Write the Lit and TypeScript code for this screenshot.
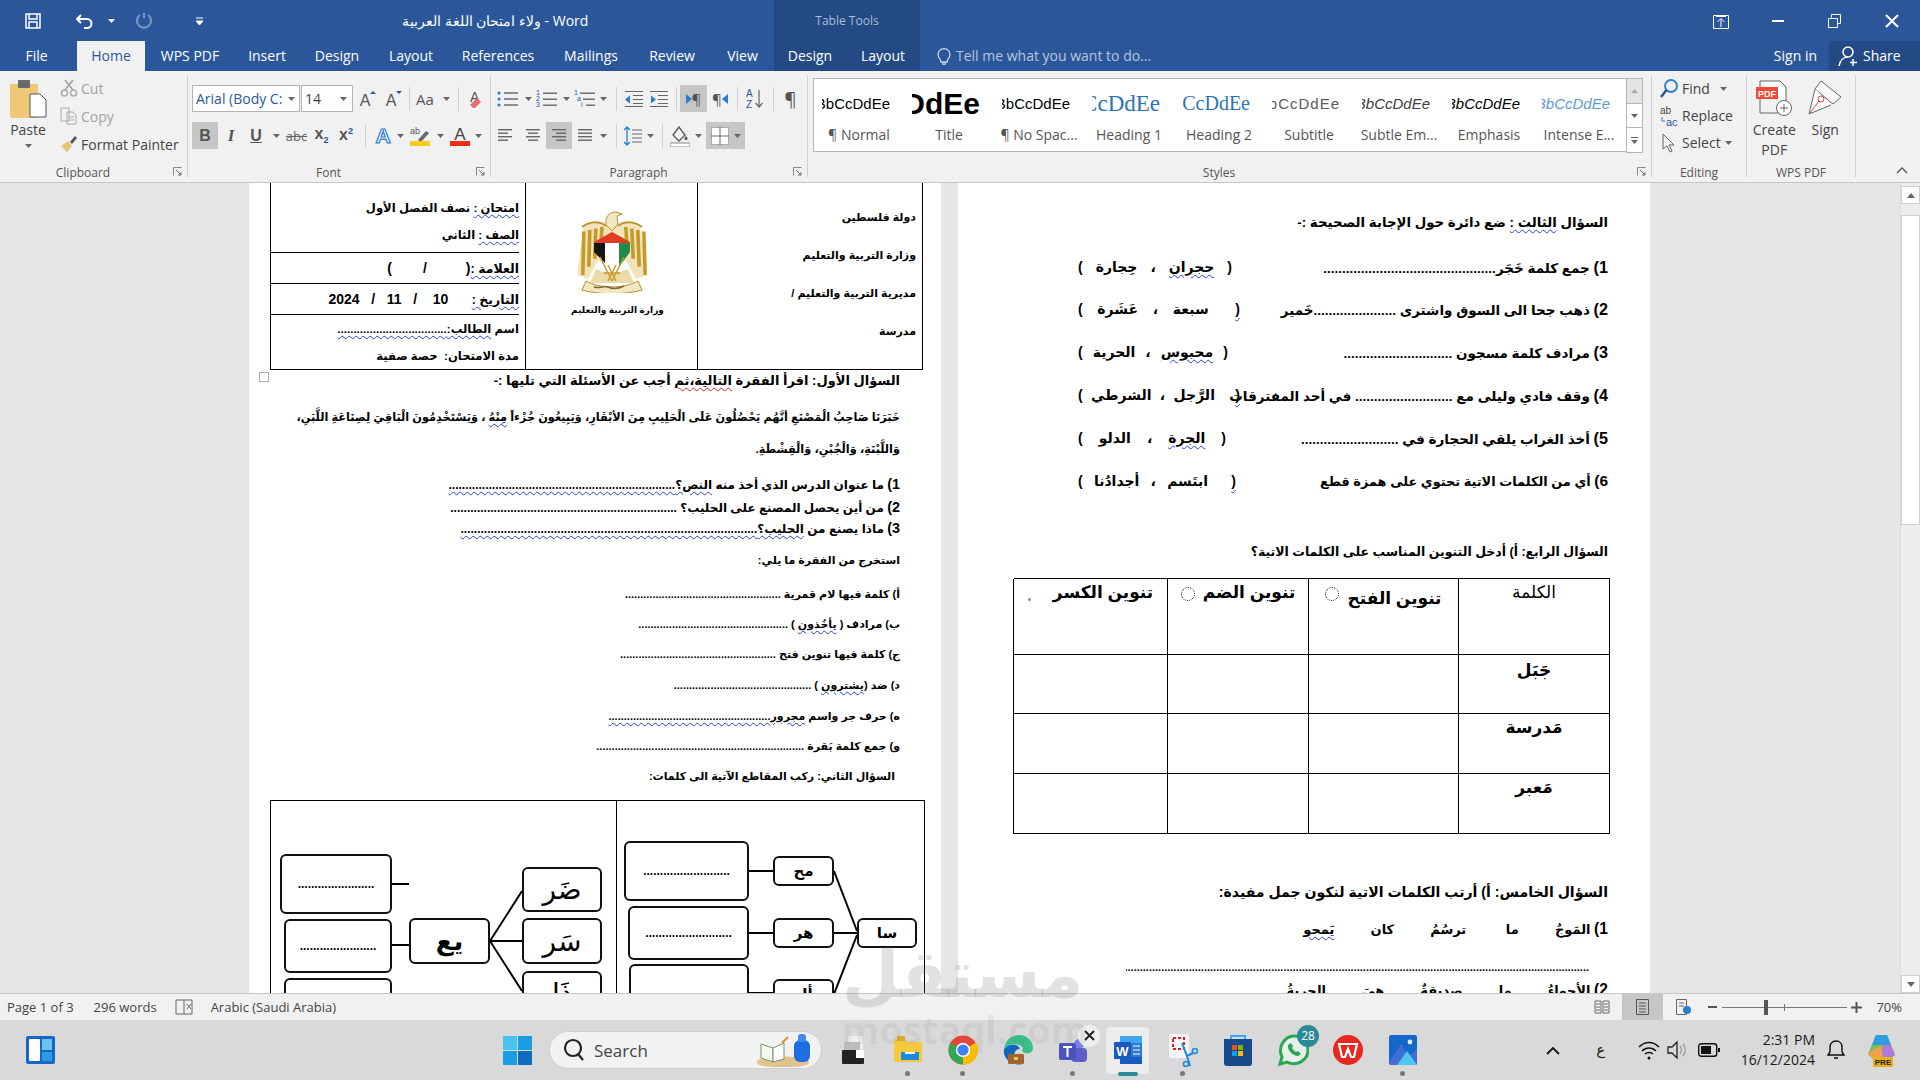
import { LitElement, html, svg, css, nothing } from 'lit';
import { customElement } from 'lit/decorators.js';

const ico = (w: number, h: number, body: any) => html`<svg width=${w} height=${h} viewBox="0 0 ${w} ${h}" fill="none">${body}</svg>`;

// little helper for the "rows of lines" icons used all over the paragraph group
const rows = (w: number, ys: number[], xs: number[][], col = '#666') => ico(w, 20, ys.map((y, i) => svg`<rect x=${xs[i][0]} y=${y} width=${xs[i][1]} height="1.4" fill=${col}></rect>`));

const arrow = html`<svg width="7" height="4" viewBox="0 0 7 4"><path d="M0 0h7L3.5 4z" fill="#666"></path></svg>`;
const launcher = html`<svg width="9" height="9" viewBox="0 0 9 9"><path d="M.5 .5h8M.5 .5v8" stroke="#888"></path><path d="M3 3l5 5M8 5v3H5" stroke="#666" fill="none"></path></svg>`;

const emblem = ico(72, 82, svg`
  <path d="M8 14C16 8 25 9 30 13L36 8 42 13C47 9 56 8 64 14L71 64 60 68 50 50H22L12 68 1 64Z" fill="#f2e3b8"></path>
  ${[6, 12, 18, 24].map(x => svg`<path d="M${x} ${16 + (24 - x) / 4}h3.6l-1 ${50 - x * 1.1}h-3.6z" fill="#c49a2a"></path>`)}
  ${[48, 54, 60, 66].map(x => svg`<path d="M${x} ${16 + (x - 48) / 4}h3.6l1.4 ${50 - (72 - x) * 1.1}h-3.6z" fill="#c49a2a"></path>`)}
  <path d="M30 14C29 6 33 1 40 1L46 3 41 5 42 13 36 20Z" fill="#f3e6c2" stroke="#b88f2a"></path>
  <path d="M6 16C14 10 24 10 30 15M66 16C58 10 48 10 42 15" stroke="#b88f2a" stroke-width="1.6" fill="none"></path>
  <path d="M18 31L36 21 54 31 53 36H19Z" fill="#e33a24"></path>
  <path d="M18 32H29V52L18 41Z" fill="#151515"></path>
  <path d="M29 32H43V58L36 62 29 55Z" fill="#fff"></path>
  <path d="M43 32H54V41L43 56Z" fill="#1f8a4a"></path>
  <path d="M20 58L36 64 52 58 58 72H14Z" fill="#ecdba8"></path>
  <path d="M24 46L36 70M48 46L36 70M28 62h16M32 54l8 16M40 54l-8 16" stroke="#c49a2a" stroke-width="1.4"></path>
  <path d="M10 70C24 78 48 78 62 70L66 79C48 84 24 84 6 79Z" fill="#f3e6c2" stroke="#b88f2a"></path>
  <path d="M18 76c6 2 10-2 14 0s10 2 16-1" stroke="#7d6a2c" stroke-width="1.4" fill="none"></path>`);

const winTile = (x: number, y: number, w: number, h: number, c: string) => svg`<rect x=${x} y=${y} width=${w} height=${h} fill=${c}></rect>`;

const TASK: Record<string, any> = {
  start: ico(29, 29, svg`${winTile(0, 0, 14, 14, '#4cc2f1')}${winTile(15, 0, 14, 14, '#1b9de2')}${winTile(0, 15, 14, 14, '#1b9de2')}${winTile(15, 15, 14, 14, '#0f6cc0')}`),
  view: ico(24, 30, svg`<rect x="7" y="1" width="15" height="20" fill="#eee"></rect><rect x="3" y="7" width="16" height="12" fill="#bbb"></rect><rect x="1" y="15" width="22" height="14" rx="1" fill="#222"></rect><rect x="15" y="15" width="8" height="8" fill="#fff"></rect>`),
  files: ico(30, 30, svg`<path d="M1 4h10l3 3h15v20H1z" fill="#f7c93e"></path><rect x="4" y="1" width="8" height="5" fill="#e0a92a"></rect><rect x="8" y="17" width="18" height="8" fill="#1b8ae0"></rect><rect x="12" y="17" width="10" height="2" fill="#fff"></rect>`),
  chrome: ico(30, 30, svg`<circle cx="15" cy="15" r="14.5" fill="#eb4335"></circle><path d="M15 15L2.4 7.8A14.5 14.5 0 0 0 15 29.5l7-11z" fill="#34a853"></path><path d="M15 15l13-7.5A14.5 14.5 0 0 1 15 29.5z" fill="#fbbc05"></path><circle cx="15" cy="15" r="7.2" fill="#fff"></circle><circle cx="15" cy="15" r="5.6" fill="#3e82f1"></circle>`),
  edge: ico(32, 32, svg`<path d="M2 15C3 6 10 1 17 1c8 0 14 6 14 13 0 4-4 6-8 5-4-1-3-4-2-5-2-5-15-5-19 1z" fill="#3bbf8a"></path><path d="M2 15c4-5 14-6 16 0-5 0-7 5-5 10 1 3 5 5 9 4-3 2-8 2-12 0C4 26 1 21 2 15z" fill="#1565c0"></path><rect x="6" y="20" width="16" height="10" rx="1" fill="#a0652a"></rect><rect x="12" y="23" width="4" height="3" fill="#f0c96a"></rect>`),
  teams: ico(30, 30, svg`<circle cx="21" cy="9" r="5" fill="#7b83eb"></circle><rect x="13" y="13" width="16" height="14" rx="4" fill="#5b5fc7"></rect><rect x="1" y="8" width="17" height="17" rx="2" fill="#4b53bc"></rect><path d="M5 12h9M9.5 12v10" stroke="#fff" stroke-width="2"></path>`),
  word: ico(30, 30, svg`<path d="M7 1h22v28H7z" fill="#2b7cd3"></path><path d="M7 1h22v7H7z" fill="#41a5ee"></path><path d="M7 22h22v7H7z" fill="#185abd"></path><rect x="1" y="7" width="17" height="17" rx="1" fill="#185abd"></rect><text x="9.5" y="20.5" font-size="13" font-weight="700" fill="#fff" text-anchor="middle" font-family="Liberation Sans">W</text><path d="M20 11h7M20 15h7M20 19h7" stroke="#fff" stroke-width="1.2"></path>`),
  snip: ico(30, 34, svg`<rect x="1" y="1" width="20" height="24" rx="2" fill="#f5f5f5"></rect><rect x="5" y="5" width="11" height="11" fill="none" stroke="#e02020" stroke-width="2" stroke-dasharray="3 2"></rect><path d="M14 10l5 13 6-3M22 33l-3-10" stroke="#1b8ae0" stroke-width="2" fill="none"></path><circle cx="27" cy="18" r="2.5" stroke="#1b8ae0" stroke-width="1.6"></circle><circle cx="18" cy="31" r="2.5" stroke="#1b8ae0" stroke-width="1.6"></circle>`),
  store: ico(30, 32, svg`<path d="M8 5V2h14v3" stroke="#41a5ee" stroke-width="2" fill="none"></path><path d="M1 5h28v24a3 3 0 0 1-3 3H4a3 3 0 0 1-3-3z" fill="#164a8a"></path>${winTile(9, 11, 5, 5, '#f25022')}${winTile(15, 11, 5, 5, '#7fba00')}${winTile(9, 17, 5, 5, '#00a4ef')}${winTile(15, 17, 5, 5, '#ffb900')}`),
  wa: ico(32, 34, svg`<path d="M3 31l2-7C0 14 8 3 17 3c8 0 14 6 14 14 0 10-11 17-21 12z" stroke="#2aa84f" stroke-width="3" fill="#e6efe8"></path><path d="M11 12c-1 4 4 11 10 11l3-2-3-3-2 1c-2-1-3-3-4-4l1-2-2-3z" fill="#2aa84f"></path>`),
  wps: ico(30, 30, svg`<circle cx="15" cy="15" r="15" fill="#e8271f"></circle><path d="M6 9h18l-3 13h-3l-3-8-3 8H9z" fill="none" stroke="#fff" stroke-width="2.2"></path>`),
  photos: ico(28, 30, svg`<rect width="28" height="30" rx="2" fill="#1668c8"></rect><path d="M0 28L12 9l8 12 8-7v14a2 2 0 0 1-2 2H2z" fill="#3f6fd6"></path><path d="M8 30L18 16l10 14z" fill="#4fc6f2"></path><circle cx="21" cy="7" r="2.4" fill="#dcecff"></circle>`),
  copilot: ico(30, 36, svg`<path d="M9 3h11l8 20-6 4H6l-5-5z" fill="#6fbf5e"></path><path d="M9 3h11l4 10H5z" fill="#2f9be0"></path><path d="M16 13h8l4 10-6 4H14z" fill="#b07ad6"></path><path d="M8 17l6-4 2 14H6l-5-5z" fill="#f0a04a"></path><rect x="6" y="25" width="20" height="10" rx="1" fill="#e8b21c"></rect><text x="16" y="33" font-size="8" font-weight="700" text-anchor="middle" fill="#222" font-family="Liberation Sans">PRE</text>`),
};

const GALLERY = [
  ['Normal', 'pn', '¶ Normal'], ['Title', 'pt', 'Title'], ['NoSp', 'pn', '¶ No Spac...'],
  ['H1', 'ph1', 'Heading 1'], ['H2', 'ph2', 'Heading 2'], ['Sub', 'psub', 'Subtitle'],
  ['SE', 'pse', 'Subtle Em...'], ['Em', 'pem', 'Emphasis'], ['IE', 'pie', 'Intense E...'],
];

const dots = (n: number) => '.'.repeat(n);
// the list numbers are set a bit larger than the arabic text around them
const n = (s: string) => html`<span class="n">${s}</span>`;

// y = middle of the line on screen, flow() turns that into margins
const LEFT_LINES = [
  { y: 381, cls: 'f14', c: html`السؤال الأول: اقرأ الفقرة <span class="sq r">التالية،ثم</span> أجب عن الأسئلة التي تليها :-` },
  { y: 417, cls: 'f12', c: html`خَبَرَنَا صَاحِبُ الْمَصْنَعِ أنَّهُم يَحْصُلُونَ عَلَى الْحَلِيبِ مِنَ الأبْقَارِ، وَيَبِيعُونَ جُزْءاً <span class="sq">مِنْهُ</span> ، وَيَسْتَخْدِمُونَ الْبَاقِيَ لِصِنَاعَةِ اللَّبَنِ،` },
  { y: 449, cls: 'f12', c: html`وَاللَّبْنَةِ، وَالْجُبْنِ، وَالْقِشْطَةِ.` },
  { y: 484, cls: 'f13', c: html`${n('1)')} ما عنوان الدرس الذي أخذ منه <span class="sq">النص؟${dots(68)}</span>` },
  { y: 507, cls: 'f13', c: html`${n('2)')} من أين يحصل المصنع على الحليب؟ ${dots(68)}` },
  { y: 528, cls: 'f13', c: html`${n('3)')} ماذا يصنع من <span class="sq">الحليب؟${dots(89)}</span>` },
  { y: 560, cls: 'f11', c: html`استخرج من الفقرة ما يلي:` },
  { y: 594, cls: 'f11', c: html`أ) كلمة فيها لام قمرية ${dots(51)}` },
  { y: 624, cls: 'f11', c: html`ب) مرادف ( <span class="sq">يأخُذون</span> ) ${dots(49)}` },
  { y: 654, cls: 'f11', c: html`ج) كلمة فيها تنوين فتح ${dots(51)}` },
  { y: 685, cls: 'f11', c: html`د) ضد (<span class="sq">يشترون</span> ) ${dots(45)}` },
  { y: 716, cls: 'f11', c: html`ه) حرف جر واسم <span class="sq">مجرور${dots(53)}</span>` },
  { y: 746, cls: 'f11', c: html`و) جمع كلمة بَقرة ${dots(68)}` },
  { y: 776, cls: 'f11 ind', c: html`السؤال الثاني: ركب المقاطع الآتية الى كلمات:` },
];

// boxes of the syllable diagram, in px from the table corner
const NODES = [
  { x: 353, y: 40, w: 125, h: 60, t: dots(26), k: 'dt' }, { x: 357, y: 105, w: 121, h: 54, t: dots(26), k: 'dt' }, { x: 358, y: 163, w: 120, h: 60, t: '', k: 'dt' },
  { x: 502, y: 55, w: 61, h: 30, t: 'مح', k: 'sm' }, { x: 502, y: 117, w: 61, h: 30, t: 'هر', k: 'sm' }, { x: 502, y: 178, w: 61, h: 30, t: 'أل', k: 'sm' },
  { x: 586, y: 117, w: 60, h: 30, t: 'سا', k: 'sm' },
  { x: 9, y: 53, w: 112, h: 60, t: dots(23), k: 'dt' }, { x: 13, y: 118, w: 108, h: 54, t: dots(23), k: 'dt' }, { x: 13, y: 177, w: 108, h: 60, t: '', k: 'dt' },
  { x: 138, y: 117, w: 81, h: 46, t: 'يع', k: 'lg' },
  { x: 251, y: 66, w: 80, h: 45, t: 'ضَر', k: 'xl' }, { x: 251, y: 117, w: 80, h: 46, t: 'سَر', k: 'xl' }, { x: 251, y: 170, w: 80, h: 45, t: 'ذَا', k: 'xl' },
];
const WIRES = [
  [478, 70, 502, 70], [478, 132, 502, 132], [478, 192, 502, 192],
  [563, 70, 586, 130], [563, 132, 586, 132], [563, 193, 586, 134],
  [121, 83, 138, 83], [121, 144, 138, 144],
  [219, 140, 251, 90], [219, 140, 251, 140], [219, 140, 251, 190],
];

const CHOICES = [
  { q: html`${n('1)')} جمع كلمة خَجَر${dots(46)}`, w: 154, o: [html`<span class="sq">حجران</span>`, 'حِجارة'] },
  { q: html`${n('2)')} ذهب جحا الى السوق واشترى ${dots(22)}خَمير`, w: 150, o: ['سبعة', 'عَشَرة'], sq: true },
  { q: html`${n('3)')} مرادف كلمة مسجون ${dots(29)}`, w: 150, o: [html`<span class="sq">محبوس</span>`, 'الحرية'] },
  { q: html`${n('4)')} وقف فادي وليلى مع ${dots(26)} في أحد المفترقات`, w: 150, o: ['الرَّجل', 'الشرطي'], sq: true },
  { q: html`${n('5)')} أخذ الغراب يلقي الحجارة في ${dots(26)}`, w: 148, o: [html`<span class="sq">الجرة</span>`, 'الدلو'] },
  { q: html`<span class="tight">${n('6)')} أي من الكلمات الاتية تحتوي على همزة قطع</span>`, w: 146, o: ['ابتَسم', 'أجدادُنا'], sq: true },
];

@customElement('app-root')
export class AppRoot extends LitElement {
  static styles = css`
    :host { display: block; position: relative; width: 1920px; height: 1080px; overflow: hidden; background: #e6e6e6;
      font-family: "Open Sans", "Noto Sans", sans-serif; }
    svg { display: block; }
    .title { height: 41px; background: #2b579a; display: flex; align-items: center; color: #fff; position: relative; }
    .qat { display: flex; align-items: center; width: 774px; flex: none; }
    .qat span { display: flex; justify-content: center; }
    .doc-name { position: absolute; left: 402px; font-size: 14px; color: #fff; white-space: nowrap; }
    .tools { width: 146px; height: 41px; background: #234a84; color: #a9bcd8; font-size: 12px; display: flex; align-items: center; justify-content: center; }
    .win { margin-left: auto; display: flex; align-items: center; }
    .win span { width: 57px; display: flex; justify-content: center; }
    .tabs { height: 30px; background: #2b579a; display: flex; color: #fff; font-size: 14px; line-height: 30px; }
    .tab { text-align: center; box-sizing: border-box; }
    .tab.file { padding-right: 4px; }
    .tab.on { background: #f1f1f1; color: #2b579a; }
    .tab.ctx { background: #234a84; }
    .tell { display: flex; align-items: center; gap: 5px; margin-left: 17px; color: #b6c6de; font-size: 14px; }
    .signin { margin-left: auto; padding-right: 12px; }
    .share { width: 91px; background: #234a84; display: flex; align-items: center; gap: 3px; padding-left: 9px; box-sizing: border-box; }

    .ribbon { height: 112px; background: #f1f1f1; display: flex; border-bottom: 1px solid #c6c6c6; box-sizing: border-box; color: #444; font-size: 13px; }
    .grp { position: relative; margin: 4px 0 5px; border-right: 1px solid #d0d0d0; box-sizing: border-box; flex: none; }
    .glabel { position: absolute; bottom: -4px; left: 0; right: 0; text-align: center; font-size: 12px; color: #555; line-height: 16px; }
    .glabel.off { right: 21px; }
    .launch { position: absolute; right: 5px; bottom: 1px; }
    .clip { width: 188px; display: flex; }
    .paste { width: 56px; display: flex; flex-direction: column; align-items: center; padding-top: 5px; }
    .paste-t { margin-top: 3px; line-height: 18px; font-size: 14px; }
    .paste-a { margin-top: 5px; }
    .clip-list { display: flex; flex-direction: column; margin-top: -1px; }
    .ci { display: flex; align-items: center; gap: 3px; height: 28px; white-space: nowrap; font-size: 14px; margin-left: 4px; }
    .ci.off { color: #a3a3a3; }
    .rw { display: flex; align-items: center; height: 27px; }
    .r1 { margin-top: 10px; }
    .r2 { margin-top: 10px; }
    .s { display: flex; align-items: center; justify-content: center; flex: none; height: 27px; box-sizing: border-box; }
    .s.on { background: #c6c6c6; }
    .sep { width: 1px; height: 24px; background: #d0d0d0; flex: none; }
    .combo { height: 27px; background: #fff; border: 1px solid #b4b4b4; box-sizing: border-box; display: flex; align-items: center; justify-content: space-between; padding: 0 5px 0 3px; font-size: 14px; color: #444; flex: none; overflow: hidden; white-space: nowrap; }
    .fnt { width: 108px; padding-right: 4px; }
    .siz { width: 52px; margin-left: 1px; }
    .tb { font-family: "Liberation Serif", serif; font-size: 17px; color: #555; }
    .tbs { font-family: "Liberation Sans", sans-serif; font-size: 16px; color: #555; font-weight: 700; }
    .gal-w { width: 844px; }
    .gal { position: absolute; left: 5px; top: 3px; width: 813px; height: 74px; background: #fff; border: 1px solid #b4b4b4; border-right: none; display: flex; box-sizing: border-box; }
    .gi { width: 90px; flex: none; display: flex; flex-direction: column; align-items: center; font-size: 14px; color: #555; }
    .pv { width: 68px; height: 41px; overflow: hidden; display: flex; justify-content: flex-end; align-items: center; white-space: nowrap; color: #000; font-family: "Liberation Sans", sans-serif; font-size: 15px; margin: 4px 6px 0 0; }
    .pv span { flex: none; }
    .gl { line-height: 22px; white-space: nowrap; }
    .pt { font-size: 30px; font-weight: 700; }
    .ph1 { font-family: "Liberation Serif", serif; font-size: 23px; color: #2e74b5; }
    .ph2 { font-family: "Liberation Serif", serif; font-size: 20px; color: #2e74b5; }
    .psub { color: #5a5a5a; letter-spacing: 1px; }
    .pse { font-style: italic; color: #404040; }
    .pem { font-style: italic; }
    .pie { font-style: italic; color: #5b9bd5; }
    .gsc { position: absolute; left: 818px; top: 3px; width: 17px; height: 74px; display: flex; flex-direction: column; }
    .gsc div { flex: 1; border: 1px solid #b4b4b4; margin-bottom: -1px; background: #fff; display: flex; align-items: center; justify-content: center; }
    .gsc div.first { background: #e4e4e4; }
    .edit { width: 95px; padding: 0 0 0 8px; }
    .ed { display: flex; align-items: center; gap: 4px; height: 27px; font-size: 14px; white-space: nowrap; }
    .wps { width: 109px; display: flex; justify-content: space-around; padding: 5px 6px 0 0; }
    .wb { display: flex; flex-direction: column; align-items: center; font-size: 14px; line-height: 20px; text-align: center; }
    .collapse { flex: 1; position: relative; }
    .collapse svg { position: absolute; right: 12px; bottom: 8px; }

    .doc { height: 810px; display: flex; background: #e6e6e6; padding-left: 249px; gap: 17px; position: relative; box-sizing: border-box; }
    .page { width: 692px; height: 810px; background: #fff; overflow: hidden; flex: none; position: relative; box-sizing: border-box;
      font-family: "Liberation Sans", "DejaVu Sans", sans-serif; font-weight: 700; color: #000; }
    .n { font-size: 1.2em; }
    .sq { text-decoration: underline wavy #2440e0 1px; text-underline-offset: 2px; }
    .sq.r { text-decoration-color: #d8261c; }
    .hd { margin-right: 18px; width: 653px; height: 187px; border: 1px solid #000; border-top: none; box-sizing: border-box; display: grid; grid-template-columns: 224px 172px 255px; font-size: 11px; }
    .hd > div + div { border-right: 1px solid #000; }
    .c-a { display: flex; flex-direction: column; justify-content: space-between; padding: 28px 6px 32px 0; }
    .c-b { display: flex; flex-direction: column; align-items: center; padding-top: 28px; }
    .c-b p { margin: 12px -12px 0 0; font-size: 9px; }
    .c-c { padding: 0 6px 0 0; display: flex; flex-direction: column; font-size: 11.6px; }
    .cc-top { height: 69px; display: flex; flex-direction: column; justify-content: space-around; padding: 11px 0 4px; box-sizing: border-box; }
    .cc-row { height: 31px; border-top: 1px solid #000; display: flex; align-items: center; white-space: pre; box-sizing: border-box; font-size: 12.5px; }
    .cc-big { font-size: 14px; }
    .cc-row.last { height: 56px; flex-direction: column; align-items: flex-start; justify-content: space-around; font-size: 11.6px; }
    .l { height: 20px; line-height: 20px; white-space: pre; margin-right: 41px; }
    .f14 { font-size: 13px; }
    .f13 { font-size: 12px; }
    .f12 { font-size: 11.3px; }
    .f11 { font-size: 11px; }
    .ind { margin-right: 46px; }
    .dg { position: absolute; left: 21px; top: 617px; width: 655px; height: 400px; border: 1px solid #000; box-sizing: border-box; }
    .dg-mid { position: absolute; left: 345px; top: 0; bottom: 0; width: 1px; background: #000; }
    .dg svg { position: absolute; left: 0; top: 0; }
    .node { position: absolute; border: 2px solid #111; border-radius: 6px; background: #fff; box-sizing: border-box; display: flex; align-items: center; justify-content: center; color: #000; font-weight: 400; }
    .node.dt { font-size: 12px; font-weight: 700; }
    .node.sm { font-size: 15px; font-weight: 700; }
    .node.lg { font-size: 26px; font-weight: 700; }
    .node.xl { font-size: 28px; }
    .handle { position: absolute; left: 10px; top: 189px; width: 10px; height: 10px; border: 1px solid #aaa; background: #fff; box-sizing: border-box; }

    .q3 { margin-right: 42px; display: flex; justify-content: space-between; height: 22px; line-height: 22px; white-space: pre; font-size: 13.5px; margin-left: 120px; }
    .tight { font-size: 12.9px; }
    .h-l { margin-right: 42px; height: 22px; line-height: 22px; white-space: pre; font-size: 13.3px; }
    .h-l.s4 { font-size: 12.5px; }
    .h-l.s5 { font-size: 14.1px; }
    .ch { display: flex; justify-content: space-between; flex: none; font-size: 14px; }
    .ch i { font-style: normal; }
    .ch i.wave { text-decoration: underline wavy #2440e0 1px; text-underline-offset: 3px; padding: 0 0 0 12px; margin-right: -12px; }
    .tbl { margin: 15px 40px 0 56px; display: grid; grid-template-columns: 151px 150px 141px 154px; grid-template-rows: 76px 59px 60px 60px; border: 1px solid #000; border-width: 1px 1px 0 0; box-sizing: border-box; width: 596px; }
    .tbl > div { border-left: 1px solid #000; border-bottom: 1px solid #000; display: flex; justify-content: center; font-size: 17px; line-height: 26px; padding-top: 1px; gap: 8px; }
    .tbl > div.w { font-weight: 400; }
    .ring { width: 12px; height: 12px; border: 1px dotted #222; border-radius: 50%; margin-top: 7px; flex: none; }
    .mark { width: 3px; height: 3px; background: #888; border-radius: 50%; margin: 18px 14px 0 0; flex: none; }
    .words { margin-right: 42px; display: flex; height: 22px; line-height: 22px; font-size: 13px; white-space: pre; }
    .words span { flex: none; }
    .sqdots { margin-right: 61px; width: 463px; height: 12px; line-height: 12px; overflow: hidden; white-space: nowrap; font-size: 11px; text-decoration: underline wavy #2440e0 1px; text-underline-offset: 1px; }

    .sb { position: absolute; right: 0; top: 0; bottom: 0; width: 20px; background: #ededed; border-left: 1px solid #dcdcdc; box-sizing: border-box; }
    .sb-btn { height: 18px; margin-top: 3px; display: flex; align-items: center; justify-content: center; background: #fff; border: 1px solid #cfcfcf; box-sizing: border-box; }
    .sb-th { position: absolute; left: 0; right: 0; top: 32px; height: 310px; background: #fff; border: 1px solid #cfcfcf; box-sizing: border-box; }
    .sb-dn { position: absolute; left: 0; right: 0; bottom: 0; }

    .status { height: 27px; background: #f1f1f1; border-top: 1px solid #c6c6c6; box-sizing: border-box; display: flex; align-items: center; font-size: 13px; color: #444; white-space: nowrap; }
    .st-l { display: flex; align-items: center; margin-left: 7px; }
    .st-r { margin-left: auto; display: flex; align-items: center; height: 100%; }
    .st-b { width: 41px; height: 100%; display: flex; align-items: center; justify-content: center; }
    .st-b.on { background: #c6c6c6; }
    .zoom { display: flex; align-items: center; margin-left: 4px; }
    .track { width: 125px; height: 1px; background: #777; position: relative; margin: 0 4px 0 5px; }
    .thumb { position: absolute; left: 42px; top: -7px; width: 4px; height: 15px; background: #555; }
    .tick { position: absolute; left: 62px; top: -3px; width: 1px; height: 7px; background: #777; }
    .pct { margin: 0 18px 0 14px; }

    .task { height: 60px; background: #d9d9d9; display: flex; align-items: center; position: relative; }
    .wid { margin-left: 26px; width: 477px; flex: none; }
    .sl { width: 46px; flex: none; }
    .search { width: 273px; height: 38px; border-radius: 19px; background: #f2f2f2; border: 1px solid #d0d0d0; box-sizing: border-box; display: flex; align-items: center; padding-left: 13px; gap: 9px; font-size: 17px; color: #444; margin-right: 3px; position: relative; flex: none; }
    .search em { position: absolute; right: 6px; top: 2px; }
    .app { width: 55px; height: 47px; flex: none; display: flex; align-items: center; justify-content: center; position: relative; }
    .app.act { background: #ececec; border-radius: 4px; width: 43px; margin: 0 6px; }
    .pin { position: absolute; bottom: -2px; left: 50%; margin-left: -2.5px; width: 5px; height: 5px; border-radius: 50%; background: #777; }
    .pin.bar { width: 20px; margin-left: -10px; height: 4px; border-radius: 2px; background: #2b8a9a; }
    .bdg { position: absolute; right: 1px; top: -2px; width: 22px; height: 22px; border-radius: 50%; background: #2b8a9a; color: #fff; font-size: 12px; display: flex; align-items: center; justify-content: center; }
    .bdg.x { background: #eee; right: 0; }
    .tray { margin-left: auto; display: flex; align-items: center; }
    .clock { font-size: 14px; line-height: 20px; text-align: right; color: #1a1a1a; white-space: nowrap; margin-left: 21px; }
    .ayn { font-family: "DejaVu Sans", sans-serif; font-size: 15px; color: #222; width: 30px; text-align: center; margin: 0 22px 0 26px; }

    .wm { position: absolute; left: 842px; top: 942px; width: 240px; pointer-events: none; text-align: center; font-family: "DejaVu Sans", sans-serif; font-weight: 700; line-height: 1; }
    .wm b { display: block; font-size: 66px; color: rgba(110,110,110,.2); }
    .wm i { display: block; font-style: normal; font-size: 38px; color: rgba(110,110,110,.09); font-family: "Open Sans", sans-serif; margin-top: 2px; }
  `;

  private slot(w: number, c: any, on = false) {
    return html`<span class="s ${on ? 'on' : ''}" style="width:${w}px">${c}</span>`;
  }

  private titleBar() {
    return html`<div class="title">
      <div class="qat">
        <span style="width:66px">${ico(16, 16, svg`<path d="M1 1h14v14H1zM4 1v5h8V1M4 15v-6h8v6" stroke="#fff" stroke-width="1.5"></path>`)}</span>
        <span style="width:40px">${ico(20, 16, svg`<path d="M5 2L1 6l4 4M1 6h10a4 4 0 0 1 0 9H8" stroke="#fff" stroke-width="2"></path>`)}</span>
        <span style="width:10px">${ico(7, 4, svg`<path d="M0 0h7L3.5 4z" fill="#fff"></path>`)}</span>
        <span style="width:56px">${ico(18, 18, svg`<path d="M13 3a7 7 0 1 1-8 0M9 1v5" stroke="#7f9ac4" stroke-width="2"></path>`)}</span>
        <span style="width:56px">${ico(8, 8, svg`<path d="M0 1h7M0 4h7L3.5 8z" stroke="#fff" fill="#fff"></path>`)}</span>
      </div>
      <div class="doc-name"><bdi>ولاء امتحان اللغة العربية</bdi> - Word</div>
      <div class="tools">Table Tools</div>
      <div class="win">
        <span>${ico(16, 16, svg`<path d="M.5 2.5h15v13H.5z" stroke="#fff"></path><path d="M8 14V6M4.500 9L8 5.500 11.500 9M3 3.500h10" stroke="#fff"></path>`)}</span>
        <span>${ico(12, 3, svg`<rect width="12" height="2" y="1" fill="#fff"></rect>`)}</span>
        <span>${ico(13, 14, svg`<path d="M3.500 3.500V.5h9v9h-3M.5 4.500h9v9h-9z" stroke="#fff"></path>`)}</span>
        <span>${ico(14, 14, svg`<path d="M1 1l12 12M13 1L1 13" stroke="#fff" stroke-width="2"></path>`)}</span>
      </div>
    </div>`;
  }

  private tabBar() {
    const tabs: [string, number, string][] = [['File', 77, 'file'], ['Home', 68, 'on'], ['WPS PDF', 90, ''], ['Insert', 64, ''], ['Design', 76, ''], ['Layout', 72, ''], ['References', 102, ''], ['Mailings', 84, ''], ['Review', 78, ''], ['View', 63, ''], ['Design', 72, 'ctx'], ['Layout', 74, 'ctx']];
    return html`<div class="tabs">
      ${tabs.map(([t, w, k]) => html`<div class="tab ${k}" style="width:${w}px">${t}</div>`)}
      <div class="tell">${ico(14, 19, svg`<path d="M3 12a6 6 0 1 1 8 0l-1 3H4zM5 17h4" stroke="#c9d6ea" stroke-width="1.300"></path>`)}Tell me what you want to do...</div>
      <div class="signin">Sign in</div>
      <div class="share">${ico(22, 22, svg`<circle cx="10" cy="7" r="5" stroke="#fff" stroke-width="1.500"></circle><path d="M1 21c1-6 5-9 9-9M15 14v7M12 17.500h7" stroke="#fff" stroke-width="1.500"></path>`)}Share</div>
    </div>`;
  }

  private clipboard() {
    return html`<div class="grp clip">
      <div class="paste">
        ${ico(38, 38, svg`<rect x="1" y="4" width="28" height="34" rx="1" fill="#efc877"></rect><rect x="9" y="0" width="12" height="8" rx="1" fill="#6b6b6b"></rect><path d="M21 14h10l6 6v17H21z" fill="#fff" stroke="#555"></path>`)}
        <div class="paste-t">Paste</div>
        <div class="paste-a">${arrow}</div>
      </div>
      <div class="clip-list">
        <div class="ci off">${ico(18, 18, svg`<path d="M5 1l8 10M13 1L5 11" stroke="#aaa" stroke-width="2"></path><circle cx="4.500" cy="14" r="3" stroke="#aaa" stroke-width="1.500"></circle><circle cx="13.500" cy="14" r="3" stroke="#aaa" stroke-width="1.500"></circle>`)}Cut</div>
        <div class="ci off">${ico(18, 18, svg`<path d="M1 1h8v13H1zM7 5h6l3 3v9H7z" stroke="#aaa" fill="#f1f1f1"></path><path d="M9 10h5M9 13h5" stroke="#aaa"></path>`)}Copy</div>
        <div class="ci">${ico(18, 18, svg`<path d="M1 11l7-5 4 5-5 6z" fill="#e8c477"></path><path d="M10 7l5-6 2 2-5 6z" fill="#555"></path>`)}Format Painter</div>
      </div>
      <div class="glabel off">Clipboard</div><div class="launch">${launcher}</div>
    </div>`;
  }

  private fontGroup() {
    const A = (c: string, up: boolean) => ico(18, 18, svg`<text x="7" y="16" font-size="16" text-anchor="middle" fill="#555" font-family="Liberation Sans">A</text><path d=${up ? 'M12 4l3-3 3 3z' : 'M12 1h6l-3 3z'} fill=${c}></path>`);
    const bar = (c: string, g: any) => ico(20, 20, svg`${g}<rect y="15" x="0" width="20" height="5" fill=${c}></rect>`);
    return html`<div class="grp" style="width:303px;padding-left:4px">
      <div class="rw r1">
        <div class="combo fnt"><span style="color:#2b579a">Arial (Body C:</span>${arrow}</div>
        <div class="combo siz"><span>14</span>${arrow}</div>
        ${this.slot(27, A('#2b579a', true))}${this.slot(25, A('#2b579a', false))}
        ${this.slot(4, nothing)}<span class="sep"></span>
        ${this.slot(30, html`<span style="color:#555;font-size:15px">Aa</span>`)}${this.slot(12, arrow)}
        ${this.slot(6, nothing)}<span class="sep"></span>
        ${this.slot(28, ico(18, 20, svg`<text x="6" y="13" font-size="14" fill="#555" font-family="Liberation Sans">A</text><path d="M6 16l7-7 4 4-6 6H9z" fill="#e2736e"></path>`))}
      </div>
      <div class="rw r2">
        ${this.slot(26, html`<span class="tbs">B</span>`, true)}
        ${this.slot(26, html`<span class="tb" style="font-style:italic;font-weight:700">I</span>`)}
        ${this.slot(24, html`<span class="tbs" style="text-decoration:underline">U</span>`)}
        ${this.slot(16, arrow)}
        ${this.slot(25, html`<span style="font-size:13px;color:#666;text-decoration:line-through">abc</span>`)}
        ${this.slot(25, html`<span class="tbs">x<sub style="font-size:9px;color:#2b579a">2</sub></span>`)}
        ${this.slot(24, html`<span class="tbs">x<sup style="font-size:9px;color:#2b579a">2</sup></span>`)}
        ${this.slot(7, nothing)}<span class="sep"></span>${this.slot(6, nothing)}
        ${this.slot(22, html`<span style="font:700 21px 'Liberation Sans';color:#fff;-webkit-text-stroke:1.2px #2b7cd3">A</span>`)}
        ${this.slot(12, arrow)}
        ${this.slot(27, bar('#fecb1e', svg`<text x="0" y="8" font-size="9" fill="#555" font-family="Liberation Sans">ab</text><path d="M8 14l8-9 3 2-8 9z" fill="#666"></path>`))}
        ${this.slot(14, arrow)}
        ${this.slot(25, bar('#ef2c14', svg`<text x="10" y="14" font-size="17" text-anchor="middle" fill="#444" font-family="Liberation Sans">A</text>`))}
        ${this.slot(13, arrow)}
      </div>
      <div class="glabel off">Font</div><div class="launch">${launcher}</div>
    </div>`;
  }

  private paragraphGroup() {
    const L = (x: number[][]) => rows(20, [3, 6.500, 10, 13.500], x);
    const bul = ico(22, 20, [4, 10, 16].map(y => svg`<circle cx="2" cy=${y} r="1.600" fill="#2b7cd3"></circle><rect x="7" y=${y - .7} width="14" height="1.400" fill="#666"></rect>`));
    const nums = ico(22, 20, [0, 1, 2].map(i => svg`<text x="0" y=${6 + i * 6} font-size="7" fill="#2b579a" font-family="Liberation Sans">${i + 1}</text><rect x="7" y=${3.500 + i * 6} width="14" height="1.400" fill="#666"></rect>`));
    const multi = ico(22, 20, svg`<text x="0" y="6" font-size="7" fill="#2b579a" font-family="Liberation Sans">1</text><rect x="6" y="3.500" width="15" height="1.400" fill="#666"></rect><text x="3" y="12" font-size="7" fill="#2b579a" font-family="Liberation Sans">a</text><rect x="9" y="9.500" width="12" height="1.400" fill="#666"></rect><text x="7" y="18" font-size="7" fill="#2b579a" font-family="Liberation Sans">i</text><rect x="12" y="15.500" width="9" height="1.400" fill="#666"></rect>`);
    const indent = (back: boolean) => ico(20, 18, svg`<path d="M1 1.500h18M9 5.500h10M9 9.500h10M9 13.500h10M1 16.500h18" stroke="#666" stroke-width="1.200"></path><path d=${back ? 'M1 9.500l5-4v8z' : 'M7 9.500l-5-4v8z'} fill="#2b7cd3"></path>`);
    return html`<div class="grp" style="width:317px;padding-left:3px">
      <div class="rw r1">
        ${this.slot(28, bul)}${this.slot(12, arrow)}${this.slot(25, nums)}${this.slot(14, arrow)}${this.slot(24, multi)}${this.slot(13, arrow)}
        ${this.slot(6, nothing)}<span class="sep"></span>${this.slot(5, nothing)}
        ${this.slot(24, indent(true))}${this.slot(26, indent(false))}
        ${this.slot(4, nothing)}<span class="sep"></span>${this.slot(3, nothing)}
        ${this.slot(27, html`<span style="display:flex;align-items:center;color:#555;font-size:15px"><svg width="6" height="10" viewBox="0 0 6 10"><path d="M0 0l6 5-6 5z" fill="#2b7cd3"></path></svg>¶</span>`, true)}
        ${this.slot(26, html`<span style="display:flex;align-items:center;color:#555;font-size:15px">¶<svg width="6" height="10" viewBox="0 0 6 10"><path d="M6 0L0 5l6 5z" fill="#2b7cd3"></path></svg></span>`)}
        ${this.slot(4, nothing)}<span class="sep"></span>${this.slot(4, nothing)}
        ${this.slot(26, ico(18, 22, svg`<text x="0" y="9" font-size="10" fill="#2b579a" font-family="Liberation Sans">A</text><text x="0" y="20" font-size="10" fill="#2b579a" font-family="Liberation Sans">Z</text><path d="M13 2v17M9.500 15l3.500 4 3.500-4" stroke="#666" stroke-width="1.200" fill="none"></path>`))}
        ${this.slot(5, nothing)}<span class="sep"></span>${this.slot(4, nothing)}
        ${this.slot(25, html`<span style="color:#555;font-size:19px">¶</span>`)}
      </div>
      <div class="rw r2">
        ${this.slot(26, L([[1, 14], [1, 10], [1, 14], [1, 10]]))}${this.slot(26, L([[3, 14], [5, 10], [3, 14], [5, 10]]))}
        ${this.slot(26, L([[3, 14], [7, 10], [3, 14], [7, 10]]), true)}${this.slot(25, L([[3, 14], [3, 14], [3, 14], [3, 14]]))}
        ${this.slot(13, arrow)}${this.slot(6, nothing)}<span class="sep"></span>${this.slot(5, nothing)}
        ${this.slot(22, ico(18, 20, svg`<path d="M3 1v18M0 4l3-3 3 3M0 16l3 3 3-3" stroke="#2b7cd3" stroke-width="1.300" fill="none"></path><path d="M8 4h10M8 8h10M8 12h10M8 16h10" stroke="#666" stroke-width="1.200"></path>`))}
        ${this.slot(12, arrow)}${this.slot(6, nothing)}<span class="sep"></span>${this.slot(5, nothing)}
        ${this.slot(24, ico(20, 22, svg`<path d="M9 2L3 10l6 6 6-6z" stroke="#555" fill="none" stroke-width="1.300"></path><path d="M16 11c2 2 2 4 0 4s-2-2 0-4z" fill="#555"></path><rect x="0" y="18" width="20" height="4" fill="#fff" stroke="#888"></rect>`))}
        ${this.slot(12, arrow)}${this.slot(2, nothing)}
        ${this.slot(39, html`<svg width="18" height="18" viewBox="0 0 18 18"><rect x=".5" y=".5" width="17" height="17" fill="#fff" stroke="#777" stroke-dasharray="1 1"></rect><path d="M0 9h18M9 0v18" stroke="#666"></path></svg><span style="margin-left:5px">${arrow}</span>`, true)}
      </div>
      <div class="glabel off">Paragraph</div><div class="launch">${launcher}</div>
    </div>`;
  }

  private styleGroup() {
    return html`<div class="grp gal-w">
      <div class="gal">
        ${GALLERY.map(g => html`<div class="gi"><div class="pv ${g[1]}"><span>AaBbCcDdEe</span></div><div class="gl">${g[2]}</div></div>`)}
      </div>
      <div class="gsc">
        <div class="first"><svg width="7" height="4" viewBox="0 0 7 4"><path d="M0 4h7L3.500 0z" fill="#aaa"></path></svg></div>
        <div>${arrow}</div>
        <div><svg width="7" height="7" viewBox="0 0 7 7"><path d="M0 0h7v1H0zM0 3h7L3.500 7z" fill="#666"></path></svg></div>
      </div>
      <div class="glabel off">Styles</div><div class="launch">${launcher}</div>
    </div>`;
  }

  private editGroup() {
    return html`<div class="grp edit">
      <div class="ed">${ico(18, 20, svg`<circle cx="11" cy="7" r="6" stroke="#2b7cd3" stroke-width="1.800"></circle><path d="M6.500 11L1 18" stroke="#2b579a" stroke-width="2.500"></path>`)}Find <span style="margin-left:6px">${arrow}</span></div>
      <div class="ed">${ico(18, 22, svg`<text x="0" y="9" font-size="10" fill="#444" font-family="Liberation Sans">ab</text><text x="6" y="21" font-size="11" fill="#2b579a" font-family="Liberation Sans">ac</text><path d="M2 12v4h3" stroke="#2b7cd3" fill="none"></path>`)}Replace</div>
      <div class="ed">${ico(18, 20, svg`<path d="M3 1v15l4-3 3 6 2-1-3-6h5z" stroke="#666" fill="#f1f1f1"></path>`)}Select<span>${arrow}</span></div>
      <div class="glabel">Editing</div>
    </div>`;
  }

  private wpsGroup() {
    return html`<div class="grp wps">
      <div class="wb">
        ${ico(38, 36, svg`<path d="M5 1h20l6 6v16" stroke="#666" fill="#fff"></path><path d="M5 1v32h20" stroke="#666" fill="none"></path><rect x="1" y="7" width="22" height="12" fill="#ed4a3a"></rect><text x="12" y="16.500" font-size="9" font-weight="700" fill="#fff" text-anchor="middle" font-family="Liberation Sans">PDF</text><circle cx="29" cy="28" r="7.500" stroke="#666" fill="#fff"></circle><path d="M29 24v8M25 28h8" stroke="#666"></path>`)}
        <span style="margin-top:4px">Create<br />PDF</span>
      </div>
      <div class="wb">
        ${ico(36, 38, svg`<path d="M14 1L34 17 26 24 8 9z" stroke="#666" fill="#f8f8f8"></path><path d="M8 9L2 34l22-9" stroke="#666" fill="#fff"></path><path d="M3 33l9-12" stroke="#d84b3a"></path><circle cx="14" cy="19" r="3" stroke="#d84b3a"></circle>`)}
        <span style="margin-top:2px">Sign</span>
      </div>
      <div class="glabel">WPS PDF</div>
    </div>`;
  }

  private ribbon() {
    return html`<div class="ribbon">
      ${this.clipboard()}${this.fontGroup()}${this.paragraphGroup()}${this.styleGroup()}${this.editGroup()}${this.wpsGroup()}
      <div class="collapse">${ico(12, 7, svg`<path d="M1 6l5-5 5 5" stroke="#555" stroke-width="1.400"></path>`)}</div>
    </div>`;
  }

  // turns a list of {y} rows into flowed lines of a given height
  private flow(lines: any[], start: number, h: number) {
    let prev = start;
    return lines.map(l => {
      const mt = l.y - h / 2 - prev;
      prev = l.y + h / 2;
      return html`<div class="l ${l.cls}" style="margin-top:${mt}px">${l.c}</div>`;
    });
  }

  private leftPage() {
    return html`<div class="page" dir="rtl">
      <div class="hd">
        <div class="c-a">
          <div>دولة فلسطين</div><div>وزارة التربية والتعليم</div><div>مديرية التربية والتعليم /</div><div>مدرسة</div>
        </div>
        <div class="c-b">${emblem}<p>وزارة التربية والتعليم</p></div>
        <div class="c-c">
          <div class="cc-top">
            <div><span class="sq">امتحان :</span> نصف الفصل الأول</div>
            <div><span class="sq">الصف :</span>  الثاني</div>
          </div>
          <div class="cc-row"><span class="sq">العلامة :</span><span class="cc-big">(          /        )</span></div>
          <div class="cc-row"><span class="sq">التاريخ :</span><span class="cc-big">      10    /   11   /   2024</span></div>
          <div class="cc-row last">
            <div>اسم <span class="sq">الطالب:${dots(34)}</span></div>
            <div>مدة الامتحان:  حصة صفية</div>
          </div>
        </div>
      </div>
      <div class="handle"></div>
      ${this.flow(LEFT_LINES, 370, 20)}
      <div class="dg">
        <div class="dg-mid"></div>
        ${ico(655, 400, WIRES.map(w => svg`<line x1=${w[0]} y1=${w[1]} x2=${w[2]} y2=${w[3]} stroke="#000" stroke-width="2"></line>`))}
        ${NODES.map(b => html`<div class="node ${b.k}" style="left:${b.x}px;top:${b.y}px;width:${b.w}px;height:${b.h}px">${b.t}</div>`)}
      </div>
    </div>`;
  }

  private rightPage() {
    const ys = [267, 309, 352, 395, 438, 481];
    return html`<div class="page" dir="rtl">
      <div class="h-l" style="margin-top:29px">السؤال <span class="sq">الثالث :</span> ضع دائرة حول الإجابة الصحيحة :-</div>
      ${CHOICES.map((c, i) => html`<div class="q3" style="margin-top:${i === 0 ? 22 : ys[i] - ys[i - 1] - 22}px">
        <span>${c.q}</span>
        <span class="ch" style="width:${c.w}px"><i class=${c.sq ? 'wave' : ''}>(</i><i>${c.o[0]}</i><i>،</i><i>${c.o[1]}</i><i>)</i></span>
      </div>`)}
      <div class="h-l s4" style="margin-top:49px">السؤال الرابع: أ) أدخل التنوين المناسب على الكلمات الاتية؟</div>
      <div class="tbl">
        <div class="w">الكلمة</div>
        <div><span style="margin-top:6px">تنوين الفتح</span><span class="ring"></span></div>
        <div><span>تنوين الضم</span><span class="ring"></span></div>
        <div><span>تنوين الكسر</span><span class="mark"></span></div>
        <div><span style="margin-top:2px">جَبَل</span></div><div></div><div></div><div></div>
        <div><span>مَدرسة</span></div><div></div><div></div><div></div>
        <div><span>مَعبر</span></div><div></div><div></div><div></div>
      </div>
      <div class="h-l s5" style="margin-top:47px">السؤال الخامس: أ) أرتب الكلمات الاتية لنكون جمل مفيدة:</div>
      <div class="words" style="margin-top:15px"><span>${n('1)')} المَوجُ          ما           ترسُمُ          كان          <span class="sq">يَمحو</span></span></div>
      <div class="sqdots" style="margin-top:21px">${dots(170)}</div>
      <div class="words" style="margin-top:6px"><span>${n('2)')} الأجواءُ          ما          صديقةٌ          هيَ          الحريةُ</span></div>
    </div>`;
  }

  private statusBar() {
    return html`<div class="status">
      <div class="st-l"><span>Page 1 of 3</span><span style="margin-left:20px">296 words</span>
        <span style="margin:0 16px 0 18px">${ico(20, 18, svg`<path d="M1 2h8v14H1zM9 2h8v14H9" stroke="#666" fill="none"></path><path d="M12 6l4 5M16 6l-4 5" stroke="#666"></path>`)}</span>
        <span>Arabic (Saudi Arabia)</span></div>
      <div class="st-r">
        <span class="st-b">${ico(16, 16, svg`<path d="M1 2h6v12H1zM9 2h6v12H9zM2 5h4M2 8h4M2 11h4M10 5h4M10 8h4M10 11h4" stroke="#666"></path>`)}</span>
        <span class="st-b on">${ico(13, 16, svg`<path d="M.5 .5h12v15H.5zM3 4h7M3 7h7M3 10h7M3 13h7" stroke="#555"></path>`)}</span>
        <span class="st-b">${ico(15, 16, svg`<path d="M.5 .5h10v15H.5zM3 4h5M3 7h5" stroke="#666"></path><circle cx="11" cy="11" r="4" fill="#2b7cd3"></circle>`)}</span>
        <div class="zoom">
          <span>${ico(9, 3, svg`<rect width="9" height="2" fill="#555"></rect>`)}</span>
          <div class="track"><div class="tick"></div><div class="thumb"></div></div>
          <span>${ico(11, 11, svg`<path d="M5.500 0v11M0 5.500h11" stroke="#555" stroke-width="2"></path>`)}</span>
          <span class="pct">70%</span>
        </div>
      </div>
    </div>`;
  }

  private taskBar() {
    const apps: [string, string, string][] = [['view', '', ''], ['files', 'pin', ''], ['chrome', 'pin', ''], ['edge', '', ''], ['teams', 'pin', 'x'], ['word', 'bar', ''], ['snip', 'pin', ''], ['store', '', ''], ['wa', '', '28'], ['wps', '', ''], ['photos', 'pin', '']];
    return html`<div class="task">
      <div class="wid">${ico(29, 28, svg`<rect width="29" height="28" rx="2" fill="#1668c8"></rect><rect x="3" y="3" width="11" height="22" rx="1" fill="#fff"></rect><rect x="16" y="3" width="10" height="11" fill="#6ac4ef"></rect><rect x="16" y="16" width="10" height="9" fill="#2a9de5"></rect>`)}</div>
      <div class="sl">${TASK.start}</div>
      <div class="search">
        ${ico(22, 24, svg`<circle cx="10" cy="10" r="8" stroke="#222" stroke-width="2.200"></circle><path d="M15 16l5 6" stroke="#222" stroke-width="2.200"></path>`)}Search
        <em>${ico(60, 33, svg`<path d="M2 27c5-6 44-6 52 0 1 5-8 6-26 6S1 32 2 27z" fill="#e0c48c"></path><path d="M6 10l12 4v14L6 24z" fill="#f7f7f2" stroke="#6f9a60"></path><path d="M18 14l11-5v16l-11 3z" fill="#fff" stroke="#6f9a60"></path><path d="M27 9l6-6" stroke="#e88a2a" stroke-width="2"></path><rect x="39" y="6" width="16" height="22" rx="6" fill="#1c6fe0"></rect><rect x="43" y="0" width="8" height="8" rx="3" fill="#3d8df0"></rect>`)}</em>
      </div>
      ${apps.map(([k, p, b]) => html`<div class="app ${p === 'bar' ? 'act' : ''}">${TASK[k]}
        ${b ? html`<span class="bdg ${b === 'x' ? 'x' : ''}">${b === 'x' ? html`<svg width="11" height="11" viewBox="0 0 11 11"><path d="M1 1l9 9M10 1l-9 9" stroke="#222" stroke-width="2"></path></svg>` : b}</span>` : nothing}
        ${p ? html`<span class="pin ${p === 'bar' ? 'bar' : ''}"></span>` : nothing}
      </div>`)}
      <div class="tray">
        ${ico(14, 9, svg`<path d="M1 8l6-6 6 6" stroke="#111" stroke-width="1.800"></path>`)}
        <span class="ayn">ع</span>
        ${ico(22, 20, svg`<path d="M1 7c6-6 14-6 20 0M4 11c4-4 10-4 14 0M7 14c2-2 6-2 8 0" stroke="#111" stroke-width="1.500"></path><circle cx="11" cy="18" r="1.500" fill="#111"></circle>`)}
        <span style="margin-left:7px">${ico(20, 20, svg`<path d="M1 7h4l5-5v16l-5-5H1z" stroke="#222" stroke-width="1.300"></path><path d="M13 6c2 2 2 6 0 8M16 4c3 3 3 9 0 12" stroke="#999" stroke-width="1.300"></path>`)}</span>
        <span style="margin-left:11px">${ico(22, 14, svg`<rect x=".7" y=".7" width="18" height="12.600" rx="2.500" stroke="#111" stroke-width="1.400"></rect><rect x="3" y="3" width="10" height="8" fill="#111"></rect><rect x="20" y="5" width="2" height="4" fill="#111"></rect>`)}</span>
        <div class="clock">2:31 PM<br />16/12/2024</div>
        <span style="margin-left:12px">${ico(18, 20, svg`<path d="M9 1c4 0 6 3 6 6v5l2 3H1l2-3V7c0-3 2-6 6-6zM7 18h4" stroke="#111" stroke-width="1.400"></path>`)}</span>
        <span style="margin:0 23px 0 22px">${TASK.copilot}</span>
      </div>
    </div>`;
  }

  render() {
    return html`
      ${this.titleBar()}${this.tabBar()}${this.ribbon()}
      <div class="doc">
        ${this.leftPage()}${this.rightPage()}
        <div class="sb">
          <div class="sb-btn"><svg width="8" height="5" viewBox="0 0 8 5"><path d="M0 5h8L4 0z" fill="#666"></path></svg></div>
          <div class="sb-th"></div>
          <div class="sb-btn sb-dn"><svg width="8" height="5" viewBox="0 0 8 5"><path d="M0 0h8L4 5z" fill="#666"></path></svg></div>
        </div>
      </div>
      ${this.statusBar()}${this.taskBar()}
      <div class="wm"><b>مستقل</b><i>mostaql.com</i></div>
    `;
  }
}
